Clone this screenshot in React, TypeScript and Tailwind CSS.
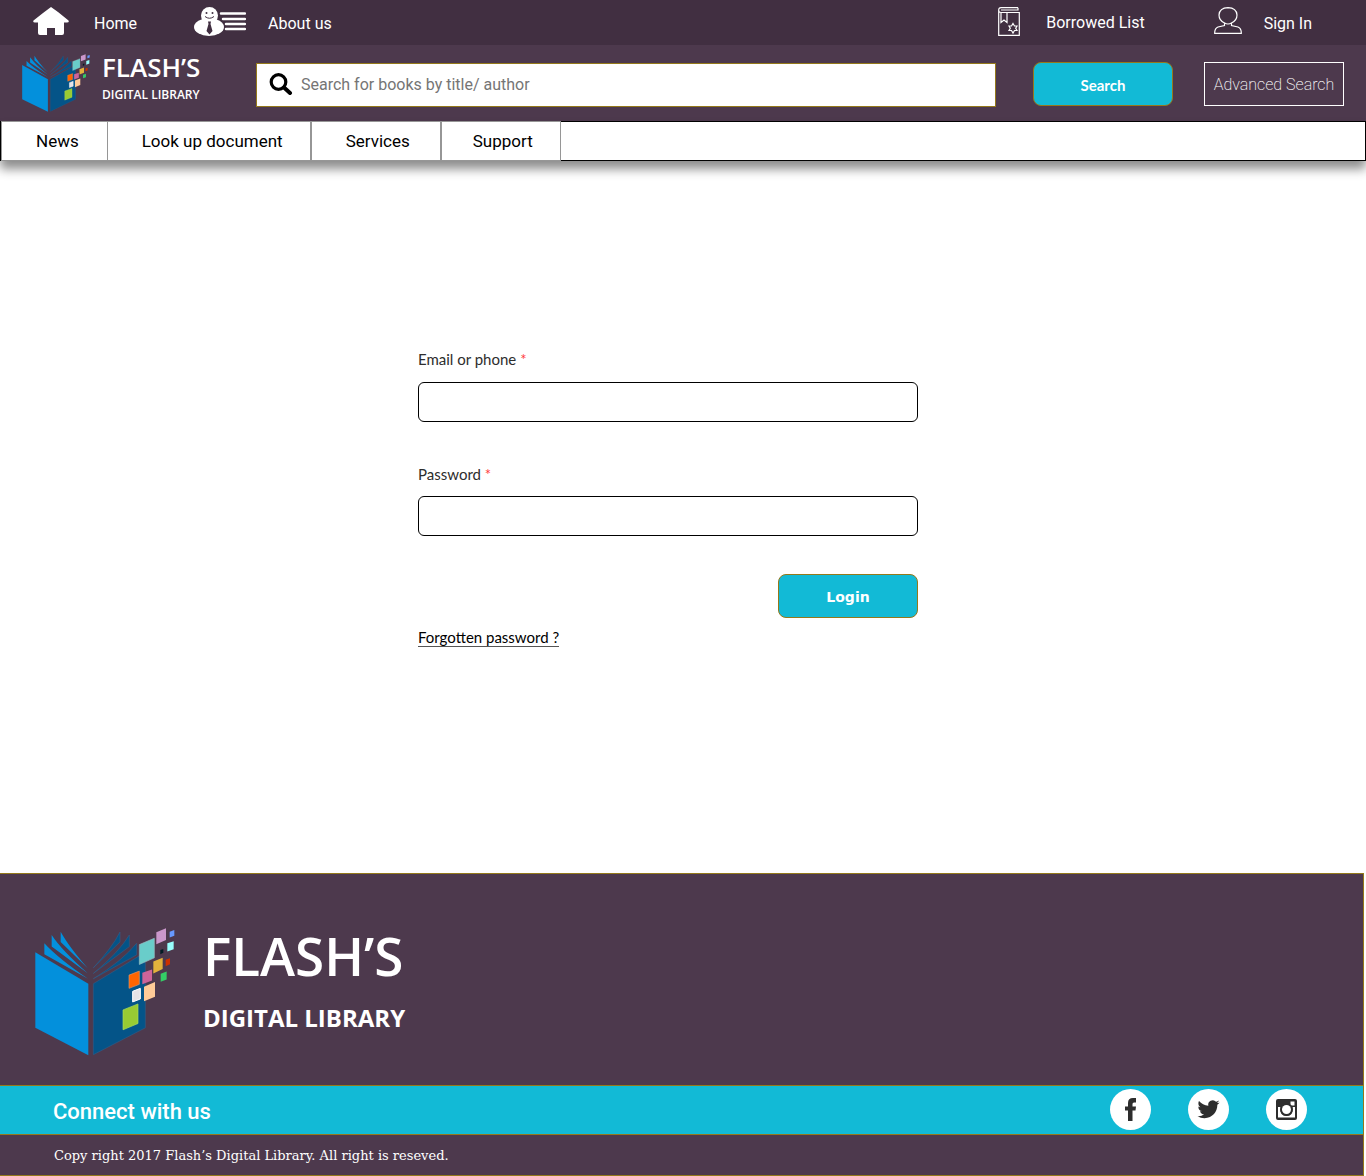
import React from "react";

const brand = "font-['Open_Sans','Noto_Sans',sans-serif]";

function BookLogo({ className }: { className: string }) {
  return (
    <svg viewBox="45 38 420 386" preserveAspectRatio="none" className={className} aria-hidden="true">
      <g fill="#0390dc">
        <path d="M46 111 205 206V422L46 339Z" />
        <path d="M73 84Q115 130 204 191L73 117Z" />
        <path d="M95 59Q125 105 204 175L95 94Z" />
        <path d="M122 49Q145 92 204 160L122 80Z" />
      </g>
      <g fill="#045488" stroke="#35618d" strokeWidth="1.5">
        <path d="M220 206 376 111V339L220 420Z" />
        <path d="M220 191Q307 137 350 84V119Z" />
        <path d="M220 175Q296 112 328 59V94Z" />
        <path d="M220 158Q276 98 300 50V80Z" />
      </g>
      <path fill="#69cdca" stroke="#9ab9c0" strokeWidth="2" d="M358 88 403 69V128L358 148Z" />
      <path fill="#cb97cb" d="M409 51 438 39V74L409 87Z" />
      <path fill="#6799ff" d="M449 49 463 44V61L449 67Z" />
      <path fill="#98fefc" d="M442 84 461 78V102L442 109Z" />
      <path fill="#021c24" d="M421 104 430 101V113L421 117Z" />
      <path fill="#e3b23c" d="M400 139 428 128V162L400 175Z" />
      <path fill="#cb3000" d="M437 134 450 129V147L437 153Z" />
      <path fill="#34cc66" d="M422 176 440 169V193L422 200Z" />
      <path fill="#ff6500" stroke="#d8976f" strokeWidth="2" d="M327 180 358 168V208L327 220Z" />
      <path fill="#cd6499" d="M367 173 396 163V196L367 208Z" />
      <path fill="#e5e3e6" stroke="#fff" strokeWidth="3" d="M338 229 361 220V252L338 261Z" />
      <path fill="#ffcb98" d="M372 215 405 201V245L372 259Z" />
      <path fill="#98cb33" stroke="#a9df5c" strokeWidth="2" d="M309 285 354 267V326L309 345Z" />
    </svg>
  );
}

function HomeIcon() {
  return (
    <svg viewBox="0 0 36 28" className="mb-0.5 h-7 w-9" fill="#fff" aria-hidden="true">
      <path d="M18 0 25 5 35.500 13.500Q36.500 15.500 34 15.500H31V26Q31 28 29 28H22V21H14V28H7Q5 28 5 26V15.500H2Q-.5 15.500.5 13.500L10 6Z" />
    </svg>
  );
}

function AboutIcon() {
  return (
    <svg viewBox="0 0 52 29" className="h-[29px] w-[52px]" aria-hidden="true">
      <ellipse cx="15" cy="20" rx="15" ry="9" fill="#fff" />
      <circle cx="15.500" cy="8.500" r="8.500" fill="#fff" />
      <g fill="#412f41">
        <circle cx="12.500" cy="6" r="1" />
        <circle cx="18.500" cy="6" r="1" />
        <path d="M14 14.500H17L16.500 17 18.500 24 15.500 27.500 12.500 24 14.500 17Z" />
      </g>
      <path d="M11 9.500Q15.500 13 20 9.500" fill="none" stroke="#412f41" />
      <path d="M27 6.500H51M29 12H51M32 17H51M32 22H51" stroke="#fff" strokeWidth="2.500" strokeLinecap="round" />
    </svg>
  );
}

function BorrowedIcon() {
  return (
    <svg viewBox="0 0 22 29" className="h-[29px] w-[22px]" fill="none" stroke="#fff" strokeWidth="1.200" aria-hidden="true">
      <path d="M20 .7H3Q.7.7.7 3V28.300H21.300V5.500H3Q.7 5.500.7 3M3 3H20V.7M3 5.500V15.500L6 13 9 15.500V5.500" />
      <path d="m15 16.500 1.500 2.500H19L17.700 21.200 19 23.500H16.500L15 26 13.500 23.500H11L12.300 21.200 11 19H13.500Z" />
    </svg>
  );
}

function UserIcon() {
  return (
    <svg viewBox="0 0 28 27" className="mb-0.5 h-[27px] w-7" fill="none" stroke="#fff" strokeWidth="1.200" aria-hidden="true">
      <path d="M10.500 16Q5 13.500 5 8 5.500 1 14 .7 22.500 1 23 8 23 13.500 17.500 16V18.500L24 20Q27.500 21.500 27.300 26.300H.7Q.5 21.500 4 20L10.500 18.500Z" />
      <path d="M10.500 16Q14 18 17.500 16" />
    </svg>
  );
}

function SearchIcon() {
  return (
    <svg viewBox="0 0 24 22" className="mb-0.5 h-[22px] w-6 shrink-0" fill="none" stroke="#000" aria-hidden="true">
      <circle cx="9.500" cy="9" r="7.300" strokeWidth="3.200" />
      <path d="m15 14.500 6 5.500" strokeWidth="4" strokeLinecap="round" />
    </svg>
  );
}

function FacebookIcon() {
  return (
    <svg viewBox="0 0 41 41" className="size-[41px]" aria-hidden="true">
      <circle cx="20.500" cy="20.500" r="20.500" fill="#fff" />
      <path fill="#2d2d2d" d="M18 32V21.500H15V17.500H18V14Q18 9 23 9H26V13.500H24Q22.500 13.500 22.500 15V17.500H26L25.500 21.500H22.500V32Z" />
    </svg>
  );
}

function TwitterIcon() {
  return (
    <svg viewBox="0 0 41 41" className="size-[41px]" aria-hidden="true">
      <circle cx="20.500" cy="20.500" r="20.500" fill="#fff" />
      <g transform="translate(9.500 9.200) scale(.92)">
        <path fill="#2d2d2d" d="M23.953 4.570a10 10 0 0 1-2.825.775 4.958 4.958 0 0 0 2.163-2.723c-.951.555-2.005.959-3.127 1.184a4.920 4.920 0 0 0-8.384 4.482C7.690 8.095 4.067 6.130 1.640 3.162a4.822 4.822 0 0 0-.666 2.475c0 1.710.87 3.213 2.188 4.096a4.904 4.904 0 0 1-2.228-.616v.06a4.923 4.923 0 0 0 3.946 4.827 4.996 4.996 0 0 1-2.212.085 4.936 4.936 0 0 0 4.604 3.417 9.867 9.867 0 0 1-6.102 2.105c-.39 0-.779-.023-1.170-.067a13.995 13.995 0 0 0 7.557 2.209c9.053 0 13.998-7.496 13.998-13.985 0-.21 0-.42-.015-.63A9.935 9.935 0 0 0 24 4.590z" />
      </g>
    </svg>
  );
}

function InstagramIcon() {
  return (
    <svg viewBox="0 0 41 41" className="size-[41px]" aria-hidden="true">
      <circle cx="20.500" cy="20.500" r="20.500" fill="#fff" />
      <rect x="10" y="10" width="21" height="21" rx="2" fill="#2d2d2d" />
      <path fill="#fff" d="M12 18H14.500Q13.500 27 20.500 27 27.500 27 26.500 18H29V28.500H12ZM24.500 12.500H28.500V16.500H24.500Z" />
      <circle cx="20.500" cy="20.500" r="6.500" fill="#2d2d2d" />
      <circle cx="20.500" cy="20.500" r="4.500" fill="#fff" />
    </svg>
  );
}

const navItems = [
  { label: "News", className: "border-r pr-7 pl-[34px]" },
  { label: "Look up document", className: "border-r-2 pr-[27px] pl-[34px]" },
  { label: "Services", className: "border-r-2 pr-[30px] pl-[34px]" },
  { label: "Support", className: "border-r pr-[27px] pl-[31px]" },
];

const social = [
  { label: "Facebook", Icon: FacebookIcon },
  { label: "Twitter", Icon: TwitterIcon },
  { label: "Instagram", Icon: InstagramIcon },
];

export default function App() {
  return (
    <div className="flex min-h-screen flex-col bg-white font-['Roboto',sans-serif] text-black">
      <header>
        <div className="flex h-[45px] items-center justify-between bg-[#412f41] pr-[54px] pb-0.5 pl-[33px] text-base text-white">
          <div className="flex items-center gap-[57px]">
            <a href="#home" className="flex items-center gap-[25px]"><HomeIcon /><span className="pt-1">Home</span></a>
            <a href="#about" className="flex items-center gap-[22px]"><AboutIcon /><span className="pt-1">About us</span></a>
          </div>
          <div className="flex items-center gap-[69px]">
            <a href="#borrowed" className="flex items-center gap-[26px]"><BorrowedIcon /><span className="pt-0.5">Borrowed List</span></a>
            <a href="#signin" className="flex items-center gap-[22px]"><UserIcon /><span className="pt-1">Sign In</span></a>
          </div>
        </div>

        <div className="flex h-[76px] items-start bg-[#4d394d] px-[22px] pt-[17px]">
          <a href="#home" aria-label="Flash's Digital Library" className="-mt-2 flex w-[234px] shrink-0 gap-3 text-white">
            <BookLogo className="h-[58px] w-[68px]" />
            <span className={`flex flex-col ${brand}`}>
              <span className="text-[26px] leading-[26px] font-semibold">FLASH’S</span>
              <span className="mt-1.5 text-xs leading-[18px] font-semibold">DIGITAL LIBRARY</span>
            </span>
          </a>
          <form className="flex flex-1 items-start" onSubmit={(e) => e.preventDefault()}>
            <label className="mt-px flex h-11 flex-1 items-center gap-2 border border-[#94791b] bg-white pl-3">
              <SearchIcon />
              <input
                type="search"
                aria-label="Search for books"
                placeholder="Search for books by title/ author"
                className="min-w-0 flex-1 text-base outline-none placeholder:text-[#757575]"
              />
            </label>
            <button type="submit" className="ml-[37px] h-11 w-[140px] rounded-lg border border-[#94791b] bg-[#12bad6] pt-0.5 font-['Lato',sans-serif] text-[15px] font-bold text-white">
              Search
            </button>
            <button type="button" className="ml-[31px] h-11 w-[140px] border border-white pt-0.5 text-base font-extralight text-white">
              Advanced Search
            </button>
          </form>
        </div>

        <nav className="flex h-10 border border-black bg-white text-[17px] shadow-[0_8px_10px_rgba(0,0,0,0.45)]">
          {navItems.map((item) => (
            <a
              key={item.label}
              href={`#${item.label.toLowerCase().replace(/ /g, "-")}`}
              className={`-my-px flex items-center border-y border-[#969696] pt-0.5 first:border-l ${item.className}`}
            >
              {item.label}
            </a>
          ))}
        </nav>
      </header>

      <main className="flex-1 pt-[186px] pr-[46px] pb-[224px] pl-4">
        <form className="mx-auto flex w-full max-w-[500px] flex-col font-['Lato',sans-serif] text-[15px] leading-6" onSubmit={(e) => e.preventDefault()}>
          <label htmlFor="email" className="text-[#2d2d2d]">Email or phone <span className="text-[#ff3b3b]">*</span></label>
          <input id="email" type="text" className="mt-[11px] h-10 rounded-md border border-black px-3 outline-none" />
          <label htmlFor="password" className="mt-10 text-[#2d2d2d]">Password <span className="text-[#ff3b3b]">*</span></label>
          <input id="password" type="password" className="mt-2.5 h-10 rounded-md border border-black px-3 outline-none" />
          <button type="submit" className="mt-[38px] h-11 w-[140px] self-end rounded-lg border border-[#94791b] bg-[#12bad6] pt-0.5 font-['DejaVu_Sans',sans-serif] text-sm font-bold text-white">
            Login
          </button>
          <a href="#forgotten" className="mt-2.5 self-start border-b border-[#555] leading-[18px]">Forgotten password ?</a>
        </form>
      </main>

      <footer className="mr-0.5 border border-l-0 border-[#94791b] bg-[#4d394d] text-white">
        <div className="flex h-[211px] items-start gap-7 pt-[54px] pl-[35px]">
          <BookLogo className="h-32 w-[140px]" />
          <div className={`flex flex-col ${brand}`}>
            <span className="text-[53px] leading-[56px] font-semibold">FLASH’S</span>
            <span className="mt-5 text-2xl leading-7 font-bold">DIGITAL LIBRARY</span>
          </div>
        </div>
        <div className="flex h-[50px] items-center justify-between border-y border-[#94791b] bg-[#12bad6] pr-14 pl-[53px]">
          <h2 className="pt-0.5 text-[22px] font-medium">Connect with us</h2>
          <div className="flex gap-[37px] pb-0.5">
            {social.map(({ label, Icon }) => (
              <a key={label} href={`#${label.toLowerCase()}`} aria-label={label}><Icon /></a>
            ))}
          </div>
        </div>
        <p className="flex h-10 items-center pt-0.5 pl-[54px] font-['DejaVu_Serif',serif] text-[13px]">
          Copy right 2017 Flash’s Digital Library. All right is reseved.
        </p>
      </footer>
    </div>
  );
}
